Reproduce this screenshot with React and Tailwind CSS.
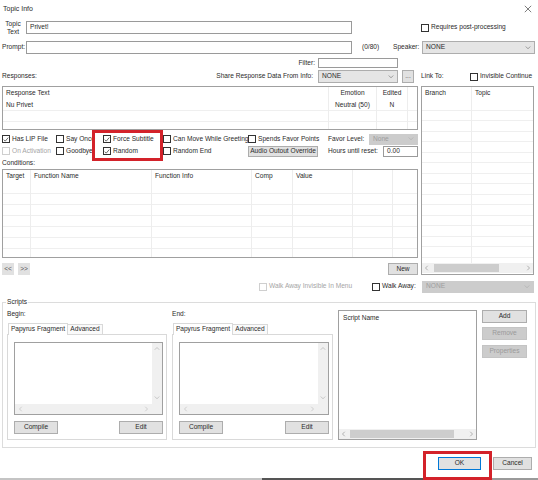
import React from 'react';

// small glyphs drawn as svg
const Chevron = ({ dir = 'down', color = '#666' }) => {
  const d = {
    down: 'M1 2 L4 5 L7 2',
    up: 'M1 5 L4 2 L7 5',
    left: 'M5 1 L2 4 L5 7',
    right: 'M3 1 L6 4 L3 7',
  }[dir];
  return (
    <svg viewBox="0 0 8 8" className="h-[6px] w-[6px] shrink-0">
      <path d={d} fill="none" stroke={color} strokeWidth="0.8" />
    </svg>
  );
};

const Box = ({ checked, disabled }) => (
  <span
    className={`flex h-[8px] w-[8px] shrink-0 items-center justify-center border bg-white ${
      disabled ? 'border-[#cfcfcf]' : 'border-[#333]'
    }`}
  >
    {checked && (
      <svg viewBox="0 0 8 8" className="h-[7px] w-[7px]">
        <path d="M1 4.2 L3 6.2 L7 1.4" fill="none" stroke="#222" strokeWidth="0.9" />
      </svg>
    )}
  </span>
);

const Check = ({ label, checked, disabled }) => (
  <label className="flex items-center gap-[2px] whitespace-nowrap">
    <Box checked={checked} disabled={disabled} />
    <span className={disabled ? 'text-[#a5a5a5]' : ''}>{label}</span>
  </label>
);

const Input = ({ className = '', children }) => (
  <div className={`flex shrink-0 items-center border border-[#9a9a9a] bg-white pl-[3px] ${className}`}>
    {children}
  </div>
);

const Select = ({ className = '', children, disabled }) => (
  <div
    className={`flex shrink-0 items-center justify-between border px-[3px] ${
      disabled ? 'border-[#cccccc] bg-[#cccccc] text-[#9d9d9d]' : 'border-[#adadad] bg-[#e5e5e5]'
    } ${className}`}
  >
    <span>{children}</span>
    <Chevron color={disabled ? '#aaa' : '#666'} />
  </div>
);

const Btn = ({ className = '', children, disabled }) => (
  <div
    className={`flex shrink-0 items-center justify-center border whitespace-nowrap ${
      disabled ? 'border-[#c4c4c4] bg-[#cccccc] text-[#9a9a9a]' : 'border-[#adadad] bg-[#e1e1e1]'
    } ${className}`}
  >
    {children}
  </div>
);

const HScroll = ({ thumb }) => (
  <div className="flex h-[10px] shrink-0 items-center bg-[#f0f0f0] px-[2px]">
    <Chevron dir="left" color="#888" />
    {thumb}
    <div className="flex-1" />
    <Chevron dir="right" color="#888" />
  </div>
);

const TextArea = () => (
  <div className="flex h-[73px] flex-col border border-[#a0a0a0] bg-white">
    <div className="flex flex-1">
      <div className="flex-1" />
      <div className="flex w-[10px] flex-col items-center justify-between bg-[#f0f0f0] py-[3px]">
        <Chevron dir="up" color="#aaa" />
        <Chevron dir="down" color="#aaa" />
      </div>
    </div>
    <div className="flex h-[10px]">
      <div className="flex flex-1 items-center justify-between bg-[#f0f0f0] px-[3px]">
        <Chevron dir="left" color="#bbb" />
        <Chevron dir="right" color="#bbb" />
      </div>
      <div className="w-[10px] bg-[#f0f0f0]" />
    </div>
  </div>
);

const ScriptPanel = ({ label, width }) => (
  <div className={`flex shrink-0 flex-col ${width}`}>
    <div className="mt-[3px] flex h-[12px] items-center">{label}</div>
    <div className="mt-[2px] ml-[1px] flex h-[12px] items-end">
      <div className="relative z-10 flex h-[12px] w-[60px] items-center justify-center border border-b-0 border-[#d9d9d9] bg-white">
        Papyrus Fragment
      </div>
      <div className="flex h-[11px] w-[35px] items-center justify-center border border-b-0 border-l-0 border-[#d9d9d9] bg-[#fafafa]">
        Advanced
      </div>
    </div>
    <div className="-mt-[1px] flex h-[106px] flex-col border border-[#d9d9d9] pt-[7px] pr-[3px] pl-[6px]">
      <TextArea />
      <div className="mt-[6px] flex justify-between">
        <Btn className="h-[13px] w-[44px]">Compile</Btn>
        <Btn className="h-[13px] w-[44px]">Edit</Btn>
      </div>
    </div>
  </div>
);

// list-view with light grid lines
const Grid = ({ cols, head, rows = [], headH, rowH, n }) => (
  <div className="flex flex-1 overflow-hidden">
    {cols.map((w, i) => (
      <div
        key={i}
        className={`flex flex-col ${w} ${i < cols.length - 1 ? 'shrink-0 border-r border-[#ededed]' : 'flex-1'}`}
      >
        <div className={`flex shrink-0 whitespace-nowrap ${headH} ${head[i]?.c ? 'justify-center' : 'pl-[3px]'}`}>
          {head[i]?.t}
        </div>
        {Array.from({ length: n }).map((_, r) => (
          <div
            key={r}
            className={`flex shrink-0 items-center whitespace-nowrap border-b border-[#efefef] ${rowH} ${
              head[i]?.c ? 'justify-center' : 'pl-[3px]'
            }`}
          >
            {rows[r]?.[i]}
          </div>
        ))}
      </div>
    ))}
  </div>
);

export default function App() {
  return (
    <div className="relative flex h-[480px] w-[538px] flex-col overflow-hidden bg-white font-['Liberation_Sans',Arial,sans-serif] text-[6.6px] leading-none text-[#2a2a2a]">
      {/* title bar */}
      <div className="flex h-[17px] shrink-0 items-center justify-between pr-[6px] pl-[3px]">
        <span className="text-[7px]">Topic Info</span>
        <svg viewBox="0 0 10 10" className="h-[8px] w-[8px]">
          <path d="M1 1 L9 9 M9 1 L1 9" stroke="#333" strokeWidth="0.8" />
        </svg>
      </div>

      {/* topic text */}
      <div className="flex h-[21px] shrink-0 items-center">
        <div className="w-[26px] text-center leading-[8px]">
          Topic
          <br />
          Text
        </div>
        <Input className="h-[13px] w-[326px]">Privet!</Input>
        <div className="ml-[69px]">
          <Check label="Requires post-processing" />
        </div>
      </div>

      {/* prompt */}
      <div className="flex h-[19px] shrink-0 items-center">
        <span className="w-[26px] shrink-0 pl-[2px] whitespace-nowrap">Prompt:</span>
        <Input className="h-[13px] w-[326px]" />
        <span className="ml-[10px] w-[31px]">(0/80)</span>
        <span className="w-[29px]">Speaker:</span>
        <Select className="h-[13px] w-[113px]">NONE</Select>
      </div>

      {/* filter */}
      <div className="flex h-[12px] shrink-0 items-center">
        <span className="w-[315px] text-right">Filter:</span>
        <Input className="ml-[3px] h-[10px] w-[80px]" />
      </div>

      {/* responses header row */}
      <div className="flex h-[15px] shrink-0 items-center pl-[2px]">
        <span className="w-[100px]">Responses:</span>
        <span className="w-[211px] text-right whitespace-nowrap">Share Response Data From Info:</span>
        <Select className="ml-[5px] h-[13px] w-[80px]">NONE</Select>
        <Btn className="ml-[4px] h-[13px] w-[12px] text-[#555]">...</Btn>
        <span className="ml-[7px] w-[49px]">Link To:</span>
        <Check label="Invisible Continue" />
      </div>

      {/* middle block */}
      <div className="mt-[2px] flex shrink-0 gap-[3px] pl-[2px]">
        <div className="flex w-[416px] shrink-0 flex-col">
          <div className="flex h-[44px] border border-[#a0a0a0] bg-white">
            <Grid
              cols={['w-[326px]', 'w-[48px]', 'w-[31px]', 'flex-1']}
              head={[{ t: 'Response Text' }, { t: 'Emotion', c: 1 }, { t: 'Edited', c: 1 }, { t: '' }]}
              rows={[['Nu Privet', 'Neutral (50)', 'N', '']]}
              headH="h-[13px] items-center"
              rowH="h-[11px]"
              n={3}
            />
          </div>

          <div className="mt-[3px] grid grid-cols-[54px_47px_60px_85px_80px_90px] grid-rows-[12px_12px] items-center">
            <Check label="Has LIP File" checked />
            <Check label="Say Once" />
            <Check label="Force Subtitle" checked />
            <Check label="Can Move While Greeting" />
            <Check label="Spends Favor Points" />
            <div className="flex items-center">
              <span className="w-[41px]">Favor Level:</span>
              <Select className="h-[11px] w-[49px]" disabled>
                None
              </Select>
            </div>
            <Check label="On Activation" disabled />
            <Check label="Goodbye" />
            <Check label="Random" checked />
            <Check label="Random End" />
            <Btn className="h-[11px] w-[70px]">Audio Outout Override</Btn>
            <div className="flex items-center">
              <span className="w-[55px] whitespace-nowrap">Hours until reset:</span>
              <Input className="h-[11px] w-[35px]">0.00</Input>
            </div>
          </div>

          <div className="flex h-[12px] items-center">Conditions:</div>

          <div className="flex h-[89px] border border-[#a0a0a0] bg-white">
            <Grid
              cols={['w-[28px]', 'w-[121px]', 'w-[100px]', 'w-[41px]', 'w-[60px]', 'w-[40px]', 'flex-1']}
              head={[
                { t: 'Target' },
                { t: 'Function Name' },
                { t: 'Function Info' },
                { t: 'Comp' },
                { t: 'Value' },
                { t: '' },
                { t: '' },
              ]}
              headH="h-[13px] items-center"
              rowH="h-[11px]"
              n={7}
            />
          </div>

          <div className="mt-[5px] flex h-[12px] items-center">
            <Btn className="h-[12px] w-[12px] border-[#e1e1e1] text-[#555]">&lt;&lt;</Btn>
            <Btn className="ml-[4px] h-[12px] w-[12px] border-[#e1e1e1] text-[#555]">&gt;&gt;</Btn>
            <div className="flex-1" />
            <Btn className="h-[12px] w-[30px]">New</Btn>
          </div>
        </div>

        {/* link to list */}
        <div className="flex h-[189px] w-[113px] shrink-0 flex-col border border-[#a0a0a0] bg-white">
          <Grid
            cols={['w-[50px]', 'flex-1']}
            head={[{ t: 'Branch' }, { t: 'Topic' }]}
            headH="h-[13px] items-center"
            rowH="h-[10.5px]"
            n={16}
          />
          <HScroll thumb={<div className="ml-[4px] h-[8px] w-[65px] bg-[#cdcdcd]" />} />
          <div className="h-[1px]" />
        </div>
      </div>

      {/* walk away row */}
      <div className="mt-[5px] flex h-[13px] shrink-0 items-center justify-end pr-[4px]">
        <div className="w-[113px]">
          <Check label="Walk Away Invisible In Menu" disabled />
        </div>
        <div className="w-[50px]">
          <Check label="Walk Away:" />
        </div>
        <Select className="h-[12px] w-[112px]" disabled>
          NONE
        </Select>
      </div>

      {/* scripts group */}
      <fieldset className="mx-[2px] mt-[6px] h-[149px] shrink-0 border border-[#dcdcdc]">
        <legend className="ml-[3px] px-[1px]">Scripts</legend>
        <div className="flex items-start pl-[4px]">
          <ScriptPanel label="Begin:" width="w-[160px]" />
          <div className="ml-[5px]">
            <ScriptPanel label="End:" width="w-[161px]" />
          </div>
          <div className="mt-[4px] ml-[5px] flex h-[130px] w-[139px] shrink-0 flex-col border border-[#a0a0a0] bg-white">
            <div className="flex h-[16px] items-center pl-[4px]">Script Name</div>
            <div className="flex-1" />
            <HScroll thumb={<div className="ml-[3px] h-[8px] w-[104px] bg-[#cdcdcd]" />} />
          </div>
          <div className="mt-[4px] ml-[5px] flex flex-col">
            <Btn className="h-[13px] w-[45px]">Add</Btn>
            <Btn className="mt-[4px] h-[13px] w-[45px]" disabled>
              Remove
            </Btn>
            <Btn className="mt-[5px] h-[13px] w-[45px]" disabled>
              Properties
            </Btn>
          </div>
        </div>
      </fieldset>

      {/* ok / cancel */}
      <div className="mt-[9px] flex h-[13px] shrink-0 justify-end pr-[6px]">
        <Btn className="h-[13px] w-[43px] !border-[#0078d7]">OK</Btn>
        <Btn className="ml-[12px] h-[13px] w-[39px]">Cancel</Btn>
      </div>

      {/* taskbar edge */}
      <div className="mt-auto flex h-[2px] shrink-0">
        <div className="w-[262px] bg-[#c4c4c4]" />
        <div className="w-[178px] bg-[#555555]" />
        <div className="flex-1 bg-[#9a9a9a]" />
      </div>

      {/* red highlight boxes */}
      <div className="absolute top-[130px] left-[92px] h-[31px] w-[71px] border-[3px] border-[#d3222a]" />
      <div className="absolute top-[451px] left-[423px] h-[29px] w-[69px] border-[3px] border-[#d3222a]" />
    </div>
  );
}
